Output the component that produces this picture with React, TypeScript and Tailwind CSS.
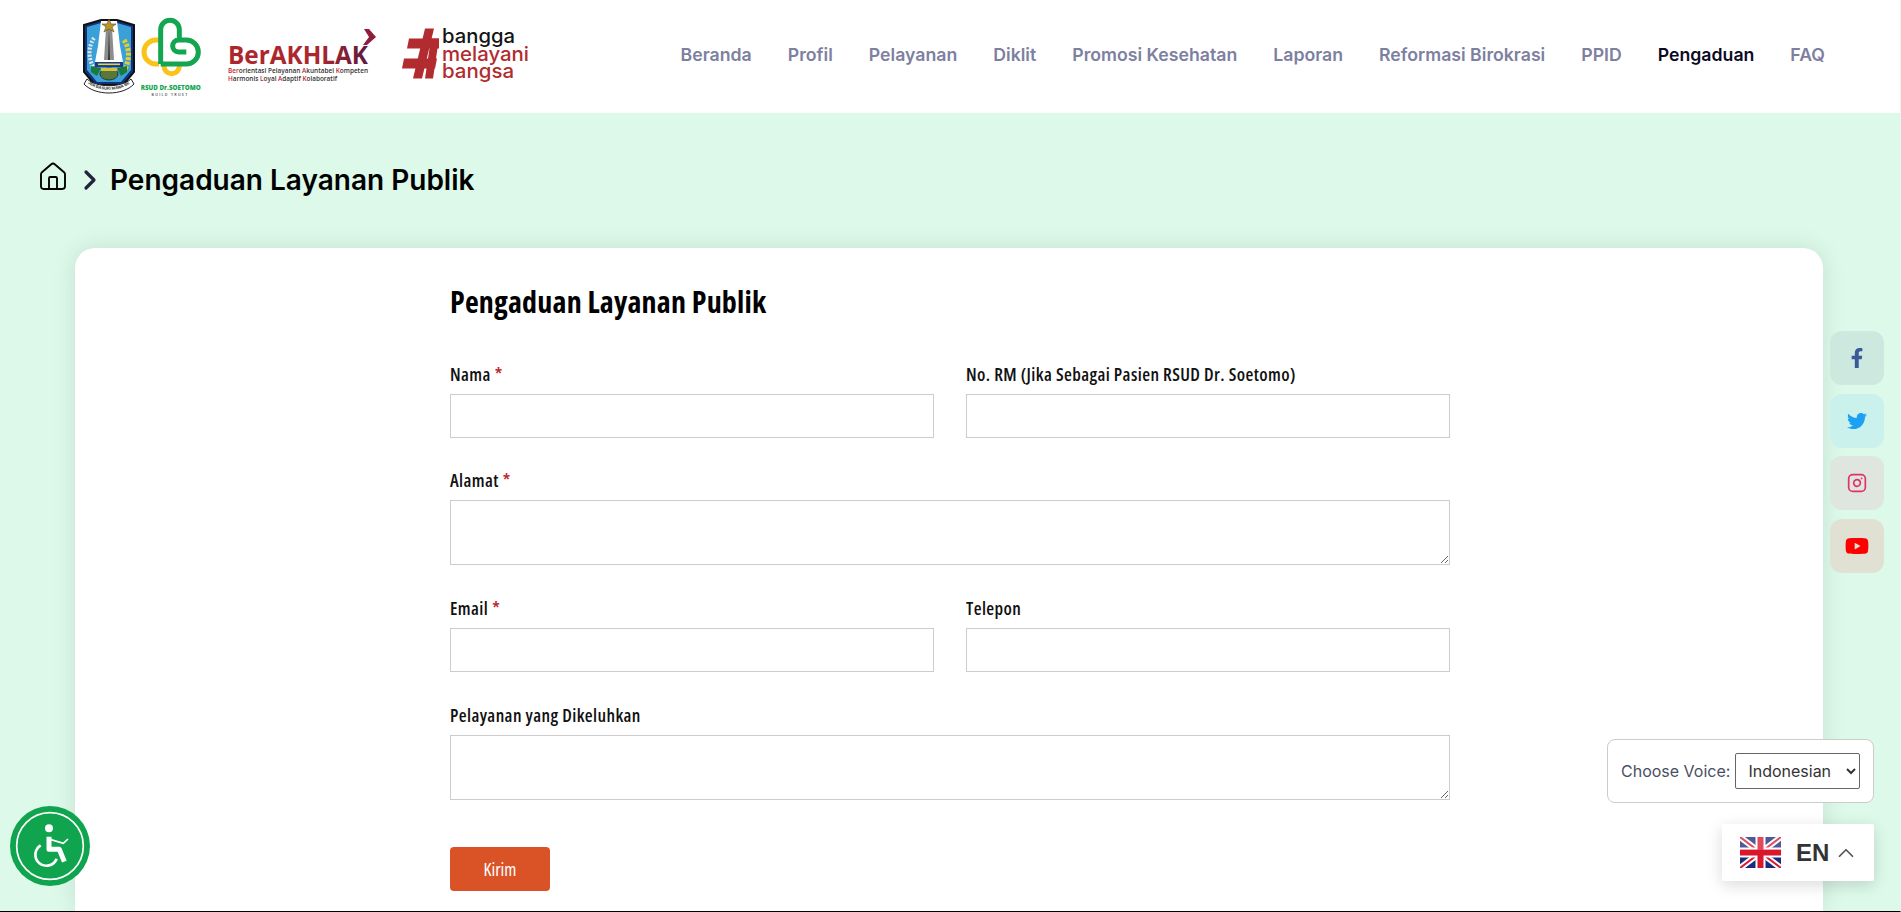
import { ChevronRight, ChevronUp, House, Instagram } from 'lucide-react'
import { FaFacebookF, FaTwitter, FaYoutube } from 'react-icons/fa'

const navigation = [
  'Beranda',
  'Profil',
  'Pelayanan',
  'Diklit',
  'Promosi Kesehatan',
  'Laporan',
  'Reformasi Birokrasi',
  'PPID',
  'Pengaduan',
  'FAQ',
]

function CoatOfArms() {
  return (
    <svg width="56" height="82" viewBox="0 0 56 82" className="shrink-0">
      <path d="M3 9 L20 4 H36 L53 9 V56 L42 69 H14 L3 56 Z" fill="#10327a" stroke="#111" strokeWidth="2" />
      <path d="M6 11 L20 7 H36 L50 11 V54 L40 66 H16 L6 54 Z" fill="#3b9fd8" />
      <path d="M20 5 H36 L39 30 L42 46 H14 L17 30 Z" fill="#fff" />
      <path d="M25 12 H31 L33 44 H23 Z" fill="#8d8d8d" />
      <path d="M28 13 L29 44 H27 Z" fill="#333" />
      <path d="M28 3 L30 8 L35 8 L31 11 L33 16 L28 13 L23 16 L25 11 L21 8 L26 8 Z" fill="#b9962d" stroke="#5a4a12" strokeWidth="0.6" />
      <path d="M13 22 C6 32 8 46 14 54" fill="none" stroke="#dfe7ea" strokeWidth="4" strokeDasharray="2 1.5" />
      <path d="M43 24 C50 34 48 48 42 56" fill="none" stroke="#e3cd2f" strokeWidth="5" strokeDasharray="3 1.5" />
      <rect x="14" y="46" width="28" height="5" fill="#173a8c" />
      <rect x="17" y="47.5" width="22" height="1.6" fill="#e9d438" />
      <path d="M10 50 L20 52 L16 60 L10 56 Z" fill="#1b7a3a" />
      <path d="M46 50 L36 52 L40 60 L46 56 Z" fill="#1b7a3a" />
      <ellipse cx="28" cy="58" rx="9" ry="6" fill="#58783a" stroke="#222" strokeWidth="0.8" />
      <rect x="20" y="52" width="16" height="3" fill="#d8c13a" />
      <path d="M3 68 C14 80 42 80 53 68 L50 63 C40 72 16 72 6 63 Z" fill="#fff" stroke="#222" strokeWidth="1" />
      <path id="coat-band" d="M7 67 C16 76 40 76 49 67" fill="none" />
      <text fontSize="4" fontWeight="700" fill="#222" fontFamily="Liberation Sans, sans-serif">
        <textPath href="#coat-band">JER BASUKI MAWA BEA</textPath>
      </text>
    </svg>
  )
}

function SoetomoLogo() {
  return (
    <svg width="70" height="90" viewBox="0 0 70 90" className="shrink-0">
      <g transform="scale(0.3333)">
        <path d="M66 84 H57 A36 36 0 0 0 57 156 H66" fill="none" stroke="#f9c31a" strokeWidth="15" />
        <path d="M81 164 V162 A23 23 0 0 0 127 162 V164" fill="none" stroke="#f9c31a" strokeWidth="15" />
        <path
          d="M71 156 V53 A28 28 0 0 1 127 53 V84 H148 A36 36 0 0 1 148 156 H71 M148 120 H125 A18 18 0 0 1 125 84"
          fill="none"
          stroke="#12a650"
          strokeWidth="15"
        />
      </g>
      <text x="33.7" y="78" textAnchor="middle" fontSize="7.6" fontWeight="800" fill="#12a650" fontFamily="Open Sans, sans-serif" textLength="60" lengthAdjust="spacingAndGlyphs">
        RSUD Dr.SOETOMO
      </text>
      <text x="33" y="84" textAnchor="middle" fontSize="3.6" fontWeight="600" fill="#444" letterSpacing="1.3" fontFamily="Open Sans, sans-serif">
        BUILD TRUST
      </text>
    </svg>
  )
}

function BerakhlakLogo() {
  return (
    <svg width="150" height="58" viewBox="0 0 150 58" className="shrink-0">
      <defs>
        <linearGradient id="akhlak" x1="0" x2="1">
          <stop offset="0.65" stopColor="#ab272d" />
          <stop offset="1" stopColor="#5b1a3e" />
        </linearGradient>
      </defs>
      <path d="M136 1 H141 L148 9 L139 17 H135 L141 9 Z" fill="#8e1f3a" />
      <text x="0" y="36" fontSize="25" fontWeight="700" fill="url(#akhlak)" fontFamily="Open Sans, sans-serif" textLength="140" lengthAdjust="spacingAndGlyphs">
        BerAKHLAK
      </text>
      <text x="0" y="45" fontSize="6.2" fontWeight="600" fill="#333" fontFamily="Open Sans, sans-serif" textLength="140" lengthAdjust="spacingAndGlyphs">
        <tspan fill="#c0272d">Ber</tspan>orientasi Pelayanan <tspan fill="#c0272d">A</tspan>kuntabel <tspan fill="#c0272d">K</tspan>ompeten
      </text>
      <text x="0" y="53" fontSize="6.2" fontWeight="600" fill="#333" fontFamily="Open Sans, sans-serif" textLength="109" lengthAdjust="spacingAndGlyphs">
        <tspan fill="#c0272d">H</tspan>armonis <tspan fill="#c0272d">L</tspan>oyal <tspan fill="#c0272d">A</tspan>daptif <tspan fill="#c0272d">K</tspan>olaboratif
      </text>
    </svg>
  )
}

function BanggaLogo() {
  return (
    <svg width="132" height="58" viewBox="0 0 132 58" className="shrink-0">
      <path d="M25 0.5 H34 L22 50.5 H13 Z" fill="#b12b2f" />
      <path d="M31 10.5 H39 L33 50.5 H25 Z" fill="#b12b2f" />
      <path d="M9 10.5 H39 V20.5 H7 Z" fill="#b12b2f" />
      <path d="M4 30.5 H37 L35 40.5 H2 Z" fill="#b12b2f" />
      <text x="42" y="15" fontSize="20" fontWeight="500" fill="#141414" fontFamily="Inter, sans-serif" textLength="73" lengthAdjust="spacingAndGlyphs">
        bangga
      </text>
      <text x="42" y="33" fontSize="20" fontWeight="500" fill="#b12b2f" fontFamily="Inter, sans-serif" textLength="87" lengthAdjust="spacingAndGlyphs">
        melayani
      </text>
      <text x="42" y="50" fontSize="20" fontWeight="500" fill="#b12b2f" fontFamily="Inter, sans-serif" textLength="72" lengthAdjust="spacingAndGlyphs">
        bangsa
      </text>
    </svg>
  )
}

function UkFlag() {
  return (
    <svg width="41" height="31" viewBox="0 0 41 31" className="shrink-0">
      <rect width="41" height="31" fill="#1d2c7a" />
      <path d="M0 0 L41 31 M41 0 L0 31" stroke="#fff" strokeWidth="6" />
      <path d="M0 0 L41 31 M41 0 L0 31" stroke="#d9182e" strokeWidth="2" />
      <path d="M20.5 0 V31 M0 15.5 H41" stroke="#fff" strokeWidth="10" />
      <path d="M20.5 0 V31 M0 15.5 H41" stroke="#d9182e" strokeWidth="6" />
      <rect width="41" height="13" fill="#fff" opacity="0.22" />
    </svg>
  )
}

function AccessibilityButton() {
  return (
    <svg width="80" height="80" viewBox="30 48 240 240" className="absolute left-[10px] top-[806px]">
      <circle cx="150" cy="168" r="120" fill="#10a44f" />
      <circle cx="150" cy="168" r="100" fill="none" stroke="#fff" strokeWidth="5" />
      <circle cx="147" cy="115" r="12" fill="#fff" />
      <path d="M147 140 V178 H178 L193 215" fill="none" stroke="#fff" strokeWidth="15" strokeLinejoin="round" />
      <path d="M150 148 L190 160 L204 147" fill="none" stroke="#fff" strokeWidth="5" />
      <path d="M122 166 A33 33 0 1 0 170 206" fill="none" stroke="#fff" strokeWidth="8" />
    </svg>
  )
}

function Field({ label, required, className, area }: { label: string; required?: boolean; className?: string; area?: boolean }) {
  return (
    <div className={className}>
      <label className="mb-[15px] block h-[10px] text-[18px] font-semibold leading-[10px] tracking-[0.4px] text-[#111] [font-stretch:condensed]">
        {label}
        {required && <span className="ml-1 text-[#c0272d]">*</span>}
      </label>
      {area ? (
        <textarea className="block h-[65px] w-full border border-[#ccc] bg-white" />
      ) : (
        <input className="block h-[44px] w-full border border-[#ccc] bg-white" />
      )}
    </div>
  )
}

export default function App() {
  return (
    <div className="relative flex h-[912px] flex-col overflow-hidden border-b border-r border-b-black border-r-[#f0f0f0] bg-[#dcf9ea] font-['Inter',sans-serif]">
      {/* Header */}
      <header className="flex h-[113px] shrink-0 items-center justify-between bg-white pl-[81px] pr-[75px]">
        <div className="flex items-center">
          <CoatOfArms />
          <SoetomoLogo />
          <div className="ml-[21px]">
            <BerakhlakLogo />
          </div>
          <div className="ml-[22px]">
            <BanggaLogo />
          </div>
        </div>
        <nav className="flex items-center gap-[36px] pb-[2px]">
          {navigation.map((item) => (
            <a key={item} className={`text-[17.7px] font-semibold ${item === 'Pengaduan' ? 'text-[#0a0a23]' : 'text-[#7d80a0]'}`}>
              {item}
            </a>
          ))}
        </nav>
      </header>

      {/* Breadcrumb */}
      <div className="flex h-[135px] shrink-0 items-center pb-[2px] pl-[37px]">
        <House className="mb-[6px] h-[32px] w-[32px] text-black" strokeWidth={1.4} />
        <ChevronRight className="ml-[5px] h-[32px] w-[32px] text-[#23233f]" strokeWidth={2.4} />
        <h1 className="ml-[4px] text-[28px] font-semibold leading-[28px] text-black">Pengaduan Layanan Publik</h1>
      </div>

      {/* Form card */}
      <main className="ml-[75px] w-[1748px] flex-1 rounded-t-[20px] bg-white pl-[375px] pt-[39px] font-['Open_Sans',sans-serif] shadow-[0_0_24px_rgba(0,0,0,0.1)]">
        <h2 className="mb-[52px] text-[30px] font-bold leading-[30px] tracking-[0.2px] text-black [font-stretch:condensed]">Pengaduan Layanan Publik</h2>
        <form className="grid w-[1000px] grid-cols-2 gap-x-[32px]">
          <Field label="Nama" required />
          <Field label="No. RM (Jika Sebagai Pasien RSUD Dr. Soetomo)" />
          <Field label="Alamat" required area className="col-span-2 mt-[37px]" />
          <Field label="Email" required className="mt-[38px]" />
          <Field label="Telepon" className="mt-[38px]" />
          <Field label="Pelayanan yang Dikeluhkan" area className="col-span-2 mt-[38px]" />
          <button type="button" className="col-start-1 mt-[47px] h-[44px] w-[100px] rounded-[4px] bg-[#d95326] text-[18px] text-white [font-stretch:condensed]">
            Kirim
          </button>
        </form>
      </main>

      {/* Social links */}
      <div className="absolute left-[1830px] top-[331px] flex flex-col gap-[8.5px]">
        <a className="flex h-[54px] w-[54px] items-center justify-center rounded-[12px] bg-[#cde8df] text-[20px] text-[#3b5998]">
          <FaFacebookF />
        </a>
        <a className="flex h-[54px] w-[54px] items-center justify-center rounded-[12px] bg-[#caf1ec] text-[20px] text-[#1da1f2]">
          <FaTwitter />
        </a>
        <a className="flex h-[54px] w-[54px] items-center justify-center rounded-[12px] bg-[#dfe5df] text-[#e1306c]">
          <Instagram className="h-[20px] w-[20px]" />
        </a>
        <a className="flex h-[54px] w-[54px] items-center justify-center rounded-[12px] bg-[#e0e1d3] text-[24px] text-[#ff0000]">
          <FaYoutube />
        </a>
      </div>

      {/* Voice picker */}
      <div className="absolute left-[1607px] top-[739px] flex h-[64px] w-[267px] items-center rounded-[8px] border border-[#ccc] bg-white pl-[13px]">
        <span className="text-[16px] text-[#4a4f63]">Choose Voice:</span>
        <select className="ml-[5px] h-[36px] w-[125px] rounded-[2px] border border-[#666] bg-white pl-[8px] text-[16px] text-[#333]">
          <option>Indonesian</option>
        </select>
      </div>

      {/* Language switcher */}
      <div className="absolute left-[1722px] top-[824px] flex h-[57px] w-[152px] items-center rounded-[2px] bg-white pl-[18px] shadow-[0_4px_16px_rgba(0,0,0,0.15)]">
        <UkFlag />
        <span className="ml-[15px] font-['Liberation_Sans',sans-serif] text-[24px] font-bold text-[#333]">EN</span>
        <ChevronUp className="ml-[4px] h-[26px] w-[26px] text-[#555]" strokeWidth={1.6} />
      </div>

      <AccessibilityButton />
    </div>
  )
}
